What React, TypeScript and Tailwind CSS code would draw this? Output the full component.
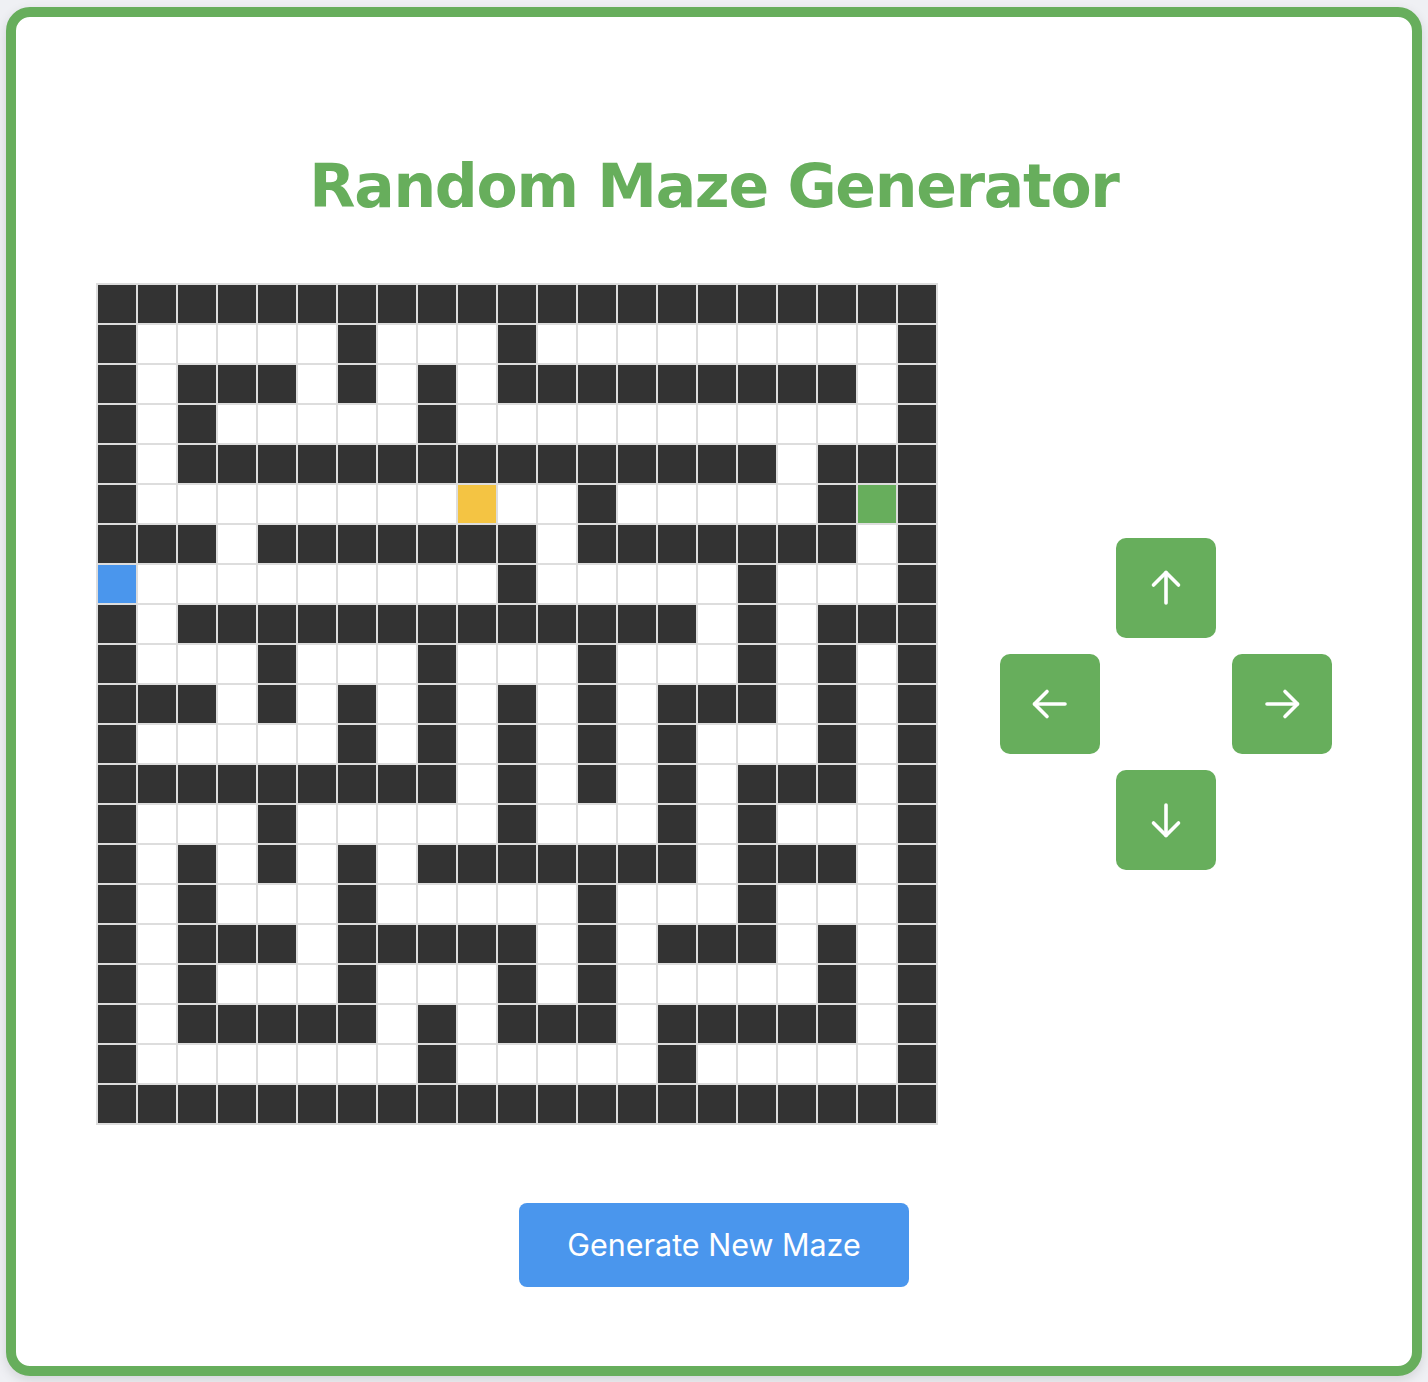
import React from "react";

const MAZE = [
  "#####################",
  "#.....#...#.........#",
  "#.###.#.#.#########.#",
  "#.#.....#...........#",
  "#.###############.###",
  "#........P..#.....#E#",
  "###.#######.#######.#",
  "S.........#.....#...#",
  "#.#############.#.###",
  "#...#...#...#...#.#.#",
  "###.#.#.#.#.#.###.#.#",
  "#.....#.#.#.#.#...#.#",
  "#########.#.#.#.###.#",
  "#...#.....#...#.#...#",
  "#.#.#.#.#######.###.#",
  "#.#...#.....#...#...#",
  "#.###.#####.#.###.#.#",
  "#.#...#...#.#.....#.#",
  "#.#####.#.###.#####.#",
  "#.......#.....#.....#",
  "#####################",
];

const cellColor = (c: string) => {
  if (c === "#") return "bg-[#333333]";
  if (c === "S") return "bg-[#4a96ed]";
  if (c === "P") return "bg-[#f4c443]";
  if (c === "E") return "bg-[#67ae5c]";
  return "bg-white";
};

const Arrow = ({ className }: { className: string }) => (
  <svg
    width="40"
    height="40"
    viewBox="0 0 40 40"
    fill="none"
    stroke="white"
    strokeWidth="3.6"
    strokeLinecap="round"
    strokeLinejoin="round"
    className={className}
  >
    <path d="M20 4.5V35" />
    <path d="M7.5 17L20 4.5L32.5 17" />
  </svg>
);

const ArrowButton = ({ pos, rot }: { pos: string; rot: string }) => (
  <button
    className={`${pos} flex items-center justify-center w-[100px] h-[100px] rounded-[10px] bg-[#67ae5c]`}
  >
    <Arrow className={rot} />
  </button>
);

export default function App() {
  return (
    <div className="min-h-screen bg-[#eff0f4] px-[6px] pt-[7px] pb-[6px] font-['Inter',sans-serif]">
      <div className="h-[1369px] flex flex-col items-center rounded-[24px] border-[10px] border-[#67ae5c] bg-white shadow-[0_4px_12px_rgba(0,0,0,0.12)]">
        <h1 className="mt-[133px] text-[60px] leading-[72px] font-bold text-[#67ae5c] tracking-[-1.3px] font-['DejaVu_Sans',sans-serif]">
          Random Maze Generator
        </h1>

        <div className="mt-[61px] flex items-center gap-[62px]">
          {/* Maze */}
          <div className="grid grid-cols-[repeat(21,40px)] border border-[#dddddd]">
            {MAZE.map((row, r) =>
              row.split("").map((c, i) => (
                <div
                  key={`${r}-${i}`}
                  className={`w-[40px] h-[40px] border border-[#dddddd] ${cellColor(c)}`}
                />
              ))
            )}
          </div>

          {/* Controls */}
          <div className="grid grid-cols-[repeat(3,100px)] grid-rows-[repeat(3,100px)] gap-4">
            <ArrowButton pos="col-start-2 row-start-1" rot="rotate-0" />
            <ArrowButton pos="col-start-1 row-start-2" rot="-rotate-90" />
            <ArrowButton pos="col-start-3 row-start-2" rot="rotate-90" />
            <ArrowButton pos="col-start-2 row-start-3" rot="rotate-180" />
          </div>
        </div>

        <button className="mt-[78px] w-[390px] h-[84px] rounded-[8px] bg-[#4a96ed] text-white text-[30.5px] font-['Inter',sans-serif]">
          Generate New Maze
        </button>
      </div>
    </div>
  );
}
